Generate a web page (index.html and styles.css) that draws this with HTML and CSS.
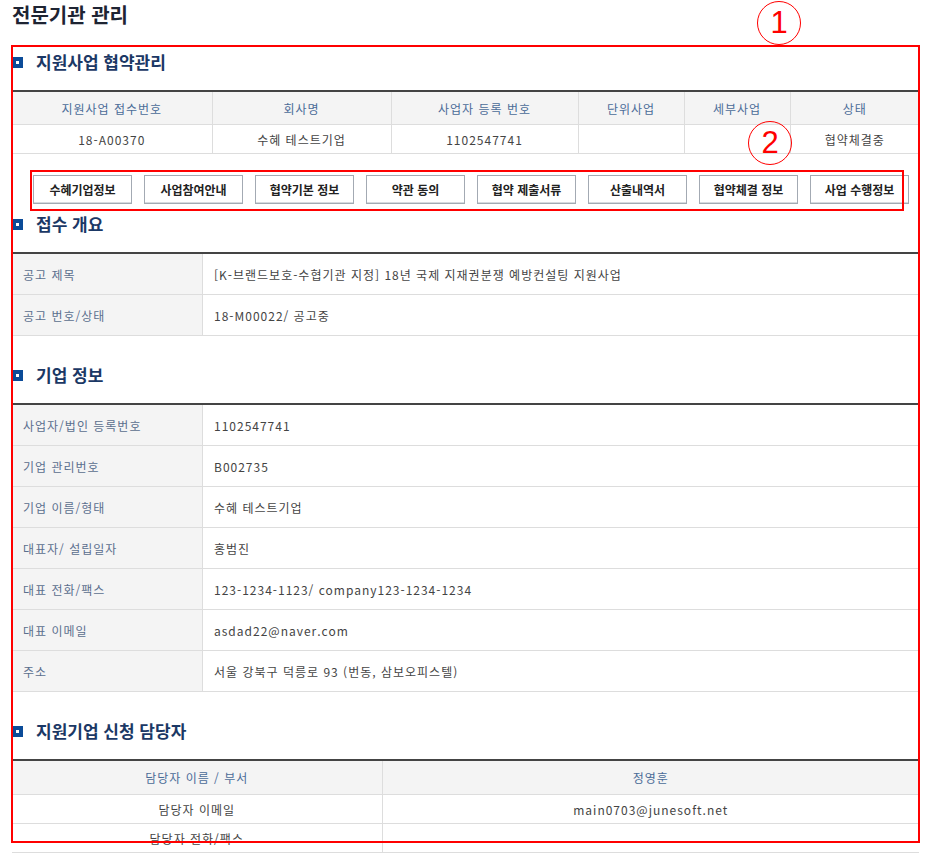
FILE: index.html
```html
<!DOCTYPE html>
<html lang="ko">
<head>
    <meta charset="UTF-8">
    <meta name="viewport" content="width=device-width, initial-scale=1.0">
    <title>전문기관 관리</title>
    <link rel="stylesheet" href="styles.css">
</head>
<body>
    <div class="page">
        <h1 class="page-title">전문기관 관리</h1>

        <h3 class="sec-title first"><span class="sec-icon"></span>지원사업 협약관리</h3>
        <table class="list-table">
            <colgroup>
                <col style="width:200px"><col style="width:179px"><col style="width:187px">
                <col style="width:106px"><col style="width:106px"><col>
            </colgroup>
            <tr>
                <th>지원사업 접수번호</th>
                <th>회사명</th>
                <th>사업자 등록 번호</th>
                <th>단위사업</th>
                <th>세부사업</th>
                <th>상태</th>
            </tr>
            <tr>
                <td>18-A00370</td>
                <td>수혜 테스트기업</td>
                <td>1102547741</td>
                <td></td>
                <td></td>
                <td>협약체결중</td>
            </tr>
        </table>

        <div class="tab-btns">
            <a href="#" class="tab-btn">수혜기업정보</a>
            <a href="#" class="tab-btn">사업참여안내</a>
            <a href="#" class="tab-btn">협약기본 정보</a>
            <a href="#" class="tab-btn">약관 동의</a>
            <a href="#" class="tab-btn">협약 제출서류</a>
            <a href="#" class="tab-btn">산출내역서</a>
            <a href="#" class="tab-btn">협약체결 정보</a>
            <a href="#" class="tab-btn">사업 수행정보</a>
        </div>

        <h3 class="sec-title after-btns"><span class="sec-icon"></span>접수 개요</h3>
        <table class="view-table">
            <tr><th>공고 제목</th><td>[K-브랜드보호-수협기관 지정] 18년 국제 지재권분쟁 예방컨설팅 지원사업</td></tr>
            <tr><th>공고 번호/상태</th><td>18-M00022/ 공고중</td></tr>
        </table>

        <h3 class="sec-title"><span class="sec-icon"></span>기업 정보</h3>
        <table class="view-table">
            <tr><th>사업자/법인 등록번호</th><td>1102547741</td></tr>
            <tr><th>기업 관리번호</th><td>B002735</td></tr>
            <tr><th>기업 이름/형태</th><td>수혜 테스트기업</td></tr>
            <tr><th>대표자/ 설립일자</th><td>홍범진</td></tr>
            <tr><th>대표 전화/팩스</th><td>123-1234-1123/ company123-1234-1234</td></tr>
            <tr><th>대표 이메일</th><td>asdad22@naver.com</td></tr>
            <tr><th>주소</th><td>서울 강북구 덕릉로 93 (번동, 삼보오피스텔)</td></tr>
        </table>

        <h3 class="sec-title"><span class="sec-icon"></span>지원기업 신청 담당자</h3>
        <table class="list-table manager">
            <colgroup><col style="width:370px"><col></colgroup>
            <tr><th>담당자 이름 / 부서</th><th>정영훈</th></tr>
            <tr><td>담당자 이메일</td><td>main0703@junesoft.net</td></tr>
            <tr><td>담당자 전화/팩스</td><td></td></tr>
        </table>

        <!-- 표시용 주석 (빨간 박스/번호) -->
        <div class="mark-box box1"></div>
        <div class="mark-box box2"></div>
        <div class="mark-num num1">1</div>
        <div class="mark-num num2">2</div>
    </div>
</body>
</html>
```

FILE: styles.css
```css
body, html {
    margin: 0;
    padding: 0;
    background: #fff;
    font-family: "Noto Sans CJK KR", "Noto Sans", sans-serif;
    color: #444;
}

.page {
    position: relative;
    width: 907px;
    margin-left: 12px;
}

.page-title {
    margin: 0;
    padding-top: 4px;
    font-size: 20px;
    line-height: 22px;
    font-weight: bold;
    color: #1e2433;
}

/* 섹션 제목 */
.sec-title {
    display: flex;
    align-items: center;
    margin: 29px 0 18px;
    font-size: 17px;
    line-height: 20px;
    font-weight: bold;
    color: #1b3865;
}
.sec-title.first { margin-top: 26px; }
.sec-title.after-btns { margin-top: 10px; }

.sec-icon {
    width: 11px;
    height: 11px;
    margin-right: 13px;
    box-sizing: border-box;
    background: #fff;
    border: 4px solid #0b4b98;
}

table {
    width: 100%;
    border-collapse: collapse;
    table-layout: fixed;
    font-size: 12px;
    letter-spacing: 1px;
}

/* 목록형 표 */
.list-table {
    border-top: 2px solid #444;
}
.list-table th,
.list-table td {
    border-bottom: 1px solid #ddd;
    border-left: 1px solid #ddd;
    text-align: center;
    padding: 0;
}
.list-table th:first-child,
.list-table td:first-child { border-left: 0; }
.list-table th {
    height: 32px;
    background: #f4f4f4;
    font-weight: normal;
    color: #4b6c98;
}
.list-table td {
    height: 28px;
    color: #444;
}
.list-table.manager th { height: 33px; }

/* 버튼 줄 */
.tab-btns {
    display: flex;
    gap: 12px;
    padding: 21px 0 0 21px;
}
.tab-btn {
    display: flex;
    align-items: center;
    justify-content: center;
    width: 99px;
    height: 29px;
    box-sizing: border-box;
    border: 1px solid #a3aab3;
    box-shadow: inset 0 -1px 0 #d6dade;
    background: #fff;
    color: #222;
    font-size: 12px;
    font-weight: bold;
    text-decoration: none;
}

/* 보기형 표 */
.view-table {
    border-top: 2px solid #444;
}
.view-table th,
.view-table td {
    height: 40px;
    border-bottom: 1px solid #ddd;
    padding: 0;
    text-align: left;
}
.view-table th {
    width: 179px;
    padding-left: 11px;
    background: #f4f4f4;
    border-right: 1px solid #ddd;
    font-weight: normal;
    color: #5b6f8e;
}
.view-table td {
    padding-left: 11px;
    color: #444;
}

/* 빨간 표시 */
.mark-box {
    position: absolute;
    border: 2px solid #f00;
    pointer-events: none;
}
.box1 {
    left: -1px;
    top: 45px;
    width: 905px;
    height: 794px;
}
.box2 {
    left: 18px;
    top: 170px;
    width: 870px;
    height: 37px;
}
.mark-num {
    position: absolute;
    width: 42px;
    height: 42px;
    border: 1.5px solid #f00;
    border-radius: 50%;
    background: transparent;
    color: #f00;
    font-family: "Liberation Sans", Arial, sans-serif;
    font-size: 31px;
    line-height: 42px;
    text-align: center;
}
.num1 { left: 745px; top: 1px; }
.num2 { left: 736px; top: 121px; }
```
